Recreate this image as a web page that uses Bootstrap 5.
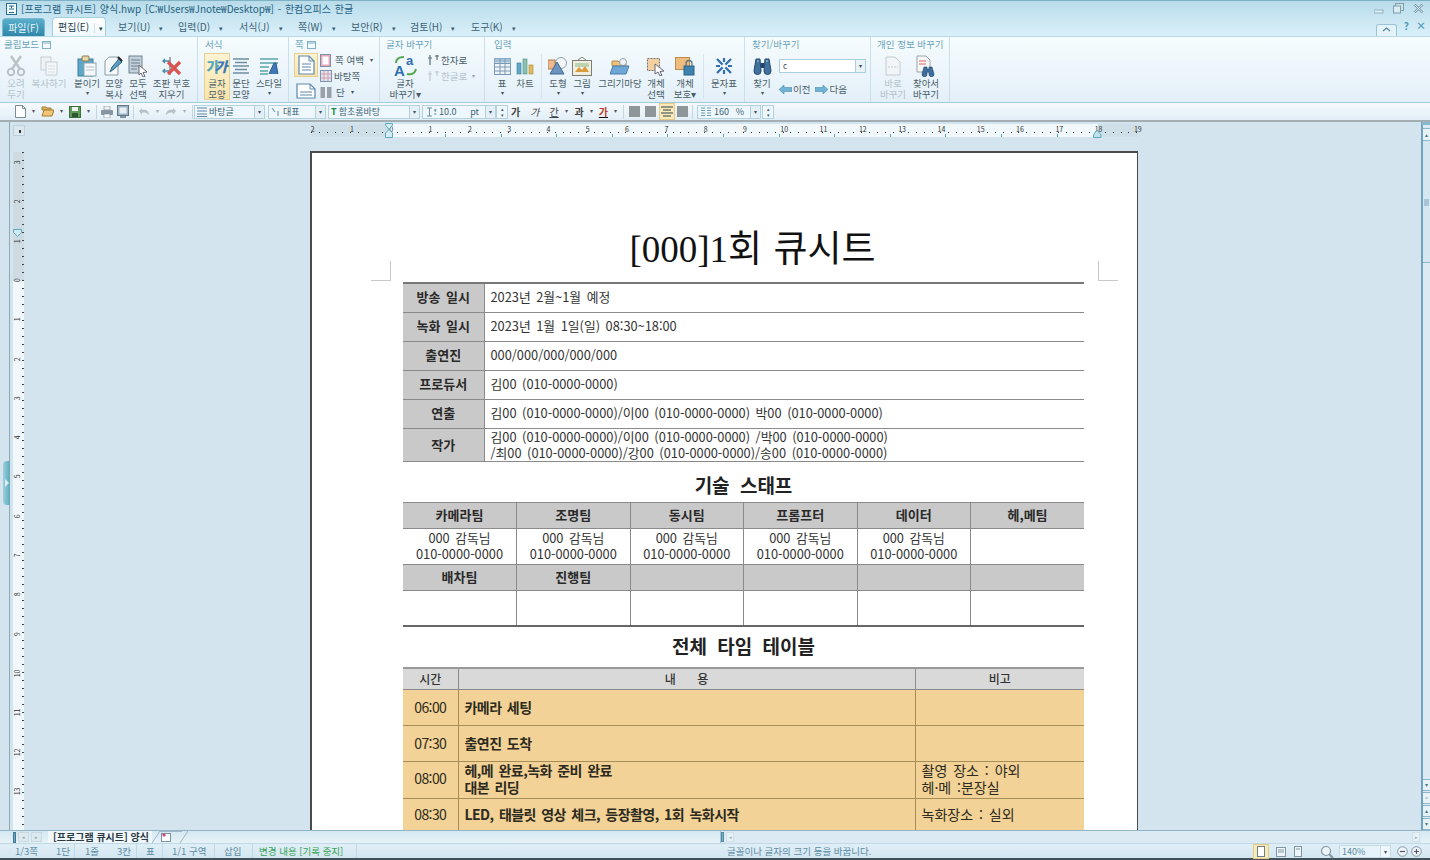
<!DOCTYPE html>
<html lang="ko">
<head>
<meta charset="utf-8">
<title>[프로그램 큐시트] 양식.hwp - 한컴오피스 한글</title>
<link href="https://cdn.jsdelivr.net/npm/bootstrap@5.3.3/dist/css/bootstrap.min.css" rel="stylesheet">
<style>
html, body { height: 860px; overflow: hidden; }
body { width: 1430px; background: #d3e4ef; color: #5a6b75; font-family: "Noto Sans CJK KR", "Liberation Sans", sans-serif; font-size: 10px; line-height: 1.1; }
svg { display: block; }
.app { width: 1430px; height: 860px; position: relative; }

/* title + tabs */
.head-band { height: 36px; background: linear-gradient(#b9dcea, #d9f0fa); border-top: 1px solid #7fb1c4; }
.title-row { height: 15px; padding-left: 6px; color: #24617f; font-size: 10px; }
.title-row .ttl { margin-left: 4px; word-spacing: 1px; }
.win-btns { margin-left: auto; padding-right: 6px; gap: 9px; }
.menu-row { height: 20px; position: relative; padding-left: 2px; }
.menu-row .file-tab { width: 43px; height: 18px; background: linear-gradient(#58aecb, #2f86a8); border: 1px solid #7db8cf; border-bottom: 0; border-radius: 4px 4px 0 0; color: #e6f6fb; text-align: center; line-height: 17px; font-size: 10px; }
.menu-row .edit-tab { width: 54px; height: 19px; margin-left: 7px; background: linear-gradient(#fff, #eef8fc); border: 1px solid #a4cddd; border-bottom: 0; border-radius: 4px 4px 0 0; color: #2b3f4a; padding-left: 5px; line-height: 18px; font-size: 10px; position: relative; z-index: 2; white-space: nowrap; }
.menu-row .edit-tab i { font-style: normal; margin-left: 5px; border-left: 1px solid #cfe2ea; padding-left: 4px; font-size: 7px; }
.menu-row .nav-item { color: #3d6275; font-size: 10px; line-height: 20px; white-space: nowrap; }
.tab-w1 { width: 60px; } .tab-w2 { width: 61px; } .tab-w3 { width: 59px; } .tab-w4 { width: 53px; }
.first-tab { margin-left: 12px; margin-top: 1px; align-self: flex-start; }
.menu-row .nav-item i { font-style: normal; font-size: 7px; margin-left: 9px; }
.help-btns { position: absolute; right: 4px; top: 0; gap: 7px; color: #4e9cb8; font-size: 10px; font-weight: 700; }
.collapse-btn { width: 21px; height: 12px; margin-top: 8px; border: 1px solid #9cc3d2; border-bottom: 0; border-radius: 3px 3px 0 0; background: #e3f3f9; }
.help-btns span { padding-top: 4px; }

/* ribbon */
.ribbon { height: 67px; background: linear-gradient(#f6fcfe, #e3eff8); border-top: 1px solid #b7d8e4; border-bottom: 1px solid #a8cbd9; }
.rb-grp { height: 65px; border-right: 1px solid #c9dfe9; flex: none; position: relative; }
.rb-cap { height: 17px; padding-top: 2px; color: #6aa3ba; font-size: 9.5px; white-space: nowrap; }
.rb-cap svg { display: inline-block; margin-left: 3px; }
.rb-item { display: flex; flex-direction: column; align-items: center; font-size: 9.5px; line-height: 10.5px; color: #4a5e69; flex: none; white-space: nowrap; text-align: center; }
.rb-item .ico { height: 24px; display: flex; align-items: center; justify-content: center; }
.rb-item .ico.ico-s { height: 22px; }
.rb-item.off, .rb-line.off { color: #b5c2c9; }
.rb-item.on { background: linear-gradient(#fdf3d2, #f8e5ae); outline: 1px solid #e6cf90; }
.caret-d { font-size: 6px; line-height: 8px; color: #44525a; }
.rb-line { display: flex; align-items: center; height: 16px; font-size: 9.5px; color: #4a5e69; white-space: nowrap; }
.rb-sep { width: 1px; height: 44px; background: #d4e5ed; flex: none; }
.iw-16 { width: 16px; } .iw-20 { width: 20px; } .iw-22 { width: 22px; } .iw-24 { width: 24px; } .iw-26 { width: 26px; } .iw-28 { width: 28px; } .iw-30 { width: 30px; } .iw-34 { width: 34px; } .iw-39 { width: 39px; } .iw-46 { width: 46px; }
.gw-198 { width: 198px; } .gw-91 { width: 91px; } .gw-105 { width: 105px; } .gw-260 { width: 260px; } .gw-126 { width: 126px; } .gw-79 { width: 79px; }
.pl-4 { padding-left: 4px; } .pl-5 { padding-left: 5px; } .pl-6 { padding-left: 6px; } .pl-7 { padding-left: 7px; } .pl-9 { padding-left: 9px; }
.ml-1 { margin-left: 1px; } .ml-2 { margin-left: 2px; } .ml-3 { margin-left: 3px; } .ml-4 { margin-left: 4px; } .ml-5 { margin-left: 5px; } .ml-6 { margin-left: 6px; } .ml-7 { margin-left: 7px; } .ml-8 { margin-left: 8px; } .ml-10 { margin-left: 10px; } .ml-18 { margin-left: 18px; } .ml-20 { margin-left: 20px; }
.mt-m2 { margin-top: -2px; }
.glyph-pic { font-weight: 900; font-size: 14px; line-height: 18px; letter-spacing: -5px; padding-right: 5px; }
.gp-a { color: #58a8b8; } .gp-b { color: #3d78b8; font-style: italic; }
.find-box { width: 87px; height: 14px; margin-top: 5px; background: #fff; border: 1px solid #a9cedd; font-size: 8px; line-height: 12px; padding-left: 3px; color: #445; position: relative; }
.find-box i { position: absolute; right: 0; top: 0; bottom: 0; width: 10px; border-left: 1px solid #a9cedd; background: #e8f3f8; font-style: normal; font-size: 6px; text-align: center; }

/* quick toolbar */
.quick { height: 19px; background: linear-gradient(#f5fafd, #e2eef6); padding-left: 15px; border-bottom: 2px solid #a3aeb3; }
.quick .dd { font-size: 6px; color: #556; margin: 0 6px; }
.quick .dd.off { color: #aab; }
.combo { height: 14px; background: #eef8fc; border: 1px solid #b3d2df; display: flex; align-items: center; color: #3d6275; font-size: 9px; flex: none; }
.combo span.v { flex: 1; padding-left: 2px; white-space: nowrap; }
.combo .unit { margin-right: 6px; }
.combo .ar { width: 10px; align-self: stretch; background: #e4f0f6; border-left: 1px solid #b3d2df; font-size: 6px; line-height: 12px; text-align: center; color: #456; flex: none; }
.spin { width: 12px; height: 14px; border: 1px solid #b3d2df; background: #eef8fc; font-size: 5px; line-height: 6px; text-align: center; color: #456; flex: none; }
.cw-71 { width: 71px; } .cw-58 { width: 58px; } .cw-92 { width: 92px; } .cw-74 { width: 74px; } .cw-64 { width: 64px; }
.q-sep { width: 1px; height: 14px; background: #c6d6df; margin: 0 4px; flex: none; }
.q-sep.q-t { margin-left: 0; }
.q-sep.q-u { margin: 0 1px 0 0; }
.fmt-g { font-weight: 700; font-size: 10px; color: #444; line-height: 14px; flex: none; }
.fmt-r { color: #c0392b; text-decoration: underline; text-decoration-color: #111; }
.al-btn { width: 11px; height: 11px; background: #8e9699; flex: none; }
.al-on { width: 16px; height: 17px; background: #fbe9b8; border: 1px solid #e4cb8b; display: flex; align-items: center; justify-content: center; flex: none; }

/* work area */
.work { height: 708px; overflow: hidden; position: relative; }
.side-l { width: 27px; flex: none; position: relative; }
.side-l .rule-line { position: absolute; left: 9px; top: 0; bottom: 0; width: 1px; background: #8ea9b8; }
.corner-box { position: absolute; left: 13px; top: 3px; width: 12px; height: 11px; background: #dbe8f0; border: 1px solid #bcd1dc; }
.corner-box::after { content: ""; position: absolute; left: 5px; top: 4px; width: 2px; height: 3px; background: #333; }
.vruler { position: absolute; left: 13px; top: 30px; width: 11px; bottom: 0; background: #f1f8fb; }
.vruler::before { content: ""; position: absolute; left: 0; right: 0; top: 0; height: 129px; background: #cfdbe2; }
.vruler::after { content: ""; position: absolute; top: 0; bottom: 0; right: 0; width: 2px; background: repeating-linear-gradient(#444 0 1px, transparent 1px 8px); }
.vruler b { position: absolute; left: 0; width: 9px; height: 39.3px; font-size: 7px; font-weight: 400; color: #333; writing-mode: vertical-rl; transform: rotate(180deg); text-align: center; line-height: 9px; }
.vn-0 { top: -9px; } .vn-1 { top: 30.3px; } .vn-2 { top: 69.6px; } .vn-3 { top: 108.9px; } .vn-4 { top: 148.2px; } .vn-5 { top: 187.5px; } .vn-6 { top: 226.8px; } .vn-7 { top: 266.1px; } .vn-8 { top: 305.4px; } .vn-9 { top: 344.7px; } .vn-10 { top: 384px; } .vn-11 { top: 423.3px; } .vn-12 { top: 462.6px; } .vn-13 { top: 501.9px; } .vn-14 { top: 541.2px; } .vn-15 { top: 580.5px; } .vn-16 { top: 619.8px; }
.v-mark { position: absolute; left: 0; top: 77px; z-index: 2; }
.side-handle { position: absolute; left: 3px; top: 339px; width: 7px; height: 44px; background: linear-gradient(90deg, #9fd0dd, #5fa9bc); border-radius: 4px 0 0 4px; }
.side-handle::after { content: ""; position: absolute; left: 2px; top: 18px; border-left: 4px solid #d7eef5; border-top: 4px solid transparent; border-bottom: 4px solid transparent; }
.doc-pane { width: 1394px; flex: none; overflow: hidden; }
.hruler { width: 827px; height: 13px; margin: 2px 0 0 284px; display: flex; font-size: 7px; color: #333; position: relative;
  background: linear-gradient(90deg, #cfdfe8 0 79px, #f0f8fb 79px 787px, #cfdfe8 787px); }
.hruler::before { content: ""; position: absolute; left: 0; right: 0; top: 8px; height: 1px; background: repeating-linear-gradient(90deg, #333 0 1px, transparent 1px 7.86px); }
.hruler::after { content: ""; position: absolute; left: 134px; right: 80px; top: 10px; height: 3px; background: repeating-linear-gradient(90deg, #5ea9bf 0 1px, transparent 1px 55.6px); }
.hruler span { width: 39.3px; text-align: center; flex: none; line-height: 11px; }
.hruler span:first-child { margin-left: -18px; }
.margin-mark { position: absolute; top: -1px; z-index: 2; }
.mm-l { left: 74px; } .mm-r { left: 782px; }

.page-sheet { width: 828px; height: 900px; margin: 14px 0 0 283px; background: #fff; border: 2px solid #4a4a4a; border-bottom: 0; border-right-width: 1px; padding: 72px 0 0 91px; position: relative; color: #333; font-size: 12.8px; }
.crop { position: absolute; width: 20px; height: 20px; border-color: #c9c9c9; border-style: solid; border-width: 0; }
.crop-l { left: 59px; top: 108px; border-right-width: 1px; border-bottom-width: 1px; }
.crop-r { left: 786px; top: 108px; border-left-width: 1px; border-bottom-width: 1px; }
.doc-title { width: 681px; height: 46px; line-height: 50px; margin-bottom: 11px; padding-left: 18px; text-align: center; font-family: "Liberation Serif", "Noto Sans CJK KR", serif; font-size: 37px; color: #111; word-spacing: 2px; white-space: nowrap; }
.sec-head { width: 681px; height: 40px; text-align: center; font-weight: 700; font-size: 19px; color: #222; word-spacing: 5px; }
.sh-a { line-height: 46px; } .sh-b { line-height: 38px; }

.table.sheet { width: 681px; table-layout: fixed; margin: 0; border-collapse: collapse; --bs-table-bg: transparent; color: #333; }
.table.sheet > tbody > tr > td { padding: 0 6px; border: 1px solid #8a8a8a; border-left-width: 0; border-right-width: 0; vertical-align: middle; line-height: 16px; word-spacing: 2px; white-space: nowrap; overflow: hidden; box-shadow: none; }
.table.sheet > tbody > tr > td + td { border-left-width: 1px; }
.table.sheet > tbody > tr > td.th-g { background: #c9c9c9; text-align: center; font-weight: 700; color: #2a2a2a; font-size: 13px; }
.info-tb tr { height: 29px; } .info-tb tr.tall { height: 33px; }
.info-tb { border-top: 2px solid #777; }
.info-tb .c1 { width: 81px; }
.table.sheet.info-tb > tbody > tr:not(.tall) > td { padding-bottom: 2px; }
.staff-tb { border-top: 1px solid #888; border-bottom: 2px solid #666; }
.staff-tb tr.r1 { height: 26px; } .staff-tb tr.r2 { height: 36px; }
.table.sheet > tbody > tr.dk > td { border-top: 1px solid #333; }
.staff-tb td { text-align: center; }
.time-tb { border-top: 2px solid #999; }
.time-tb .c1 { width: 55px; } .time-tb .c3 { width: 169px; }
.time-tb tr.hd { height: 21px; } .time-tb tr.bd { height: 36px; }
.table.sheet.time-tb > tbody > tr > td { border-color: #a58e58; font-size: 14px; line-height: 18px; }
.table.sheet.time-tb > tbody > tr.hd > td { background: #d9d9d9; border-color: #8a8a8a; text-align: center; font-size: 12px; font-weight: 500; }
.table.sheet.time-tb > tbody > tr.bd > td { background: #f2d296; color: #2d2a20; }
.table.sheet.time-tb > tbody > tr.bd.lift2 > td { padding-bottom: 2px; line-height: 17px; }
.table.sheet.time-tb > tbody > tr.bd.lift1 > td { padding-bottom: 4px; }
.table.sheet.time-tb > tbody > tr.bd > td.tm { text-align: center; padding-left: 0; padding-right: 0; letter-spacing: -.6px; }
.table.sheet.time-tb > tbody > tr.bd > td.bb { font-weight: 700; letter-spacing: -.55px; }
.side-r { width: 9px; flex: none; position: relative; background: #dcebf3; border-left: 2px solid #6fa3c0; }
.sb-top { height: 3px; margin-left: -1px; background: #8ab9cf; }
.sb-btn { height: 13px; margin-top: 3px; background: #e7f2f7; border: 1px solid #8fb7ca; border-left: 0; border-right: 0; font-size: 6px; line-height: 11px; text-align: center; color: #4a7a92; }
.sb-thumb { height: 122px; border-bottom: 1px solid #8fb7ca; background: #d5e8f1; position: relative; }
.sb-thumb::after { content: ""; position: absolute; left: 1px; right: 1px; top: 58px; height: 7px; background: #a9c4d2; }
.sb-low { position: absolute; left: 0; right: 0; bottom: 0; }
.sb-low .sb-btn { margin-top: 1px; height: 12px; line-height: 10px; }

/* sheet tabs + status */
.tab-strip { height: 13px; background: linear-gradient(#d5e8f1, #e6f2f8); border-top: 1px solid #93b4c4; position: relative; color: #30505f; }
.strip-grip { width: 3px; height: 11px; margin-left: 13px; background: #6fa3bc; border: 1px solid #3f7a96; flex: none; }
.strip-arrow { width: 11px; height: 10px; background: #dde9ef; border: 1px solid #c8d8e0; font-size: 5px; line-height: 8px; text-align: center; color: #8aa; margin-left: 2px; flex: none; }
.doc-tab { margin-left: 6px; width: 104px; font-weight: 700; font-size: 10px; color: #2b3a42; white-space: nowrap; line-height: 12px; background: #f0f7fb; padding-left: 5px; flex: none; }
.hscroll { position: absolute; left: 720px; right: 9px; top: 0; bottom: 0; background: #dcebf3; border-left: 1px solid #a9c5d3; }
.hscroll::before { content: ""; position: absolute; left: 0; top: 1px; width: 3px; height: 10px; background: #7cb0c6; border: 1px solid #4f8aa5; }
.hs-btn { position: absolute; top: 1px; width: 8px; height: 10px; background: #e6f1f6; border: 1px solid #cfe0e8; font-size: 5px; line-height: 8px; text-align: center; color: #9ab; }
.hs-l { left: 5px; } .hs-r { right: 1px; }
.status { height: 17px; background: linear-gradient(#e0eff7, #d3e6f1); color: #5d8ba2; font-size: 9.5px; border-bottom: 2px solid #41505a; border-top: 1px solid #c1d9e5; position: relative; }
.st-cell { height: 14px; line-height: 14px; flex: none; white-space: nowrap; border-right: 1px solid #c1d8e4; }
.sc-75 { width: 75px; padding-left: 15px; } .sc-62 { width: 62px; padding-left: 10px; } .sc-26 { width: 26px; padding-left: 9px; } .sc-52 { width: 52px; padding-left: 9px; } .sc-38 { width: 38px; padding-left: 9px; } .sc-104 { width: 104px; padding-left: 6px; color: #36a153; }
.gap-in { margin-left: 18px; }
.st-hint { position: absolute; left: 727px; top: 0; line-height: 14px; white-space: nowrap; }
.st-right { position: absolute; right: 8px; top: 0; height: 15px; }
.view-on { width: 16px; height: 15px; background: #fbe9b8; border: 1px solid #e4cb8b; display: flex; align-items: center; justify-content: center; }
.zoom-box { width: 52px; height: 13px; background: #e6f3f9; border: 1px solid #c5dce7; margin-left: 5px; padding-left: 2px; line-height: 11px; font-size: 9px; position: relative; }
.zoom-box i { position: absolute; right: 0; top: 0; bottom: 0; width: 10px; background: #f0f7fb; border-left: 1px solid #c5dce7; font-style: normal; font-size: 6px; text-align: center; color: #456; }
</style>
</head>
<body>
<div class="app d-flex flex-column">

  <div class="head-band">
    <div class="title-row d-flex align-items-center">
      <svg width="11" height="12" viewBox="0 0 11 12"><rect x=".5" y=".5" width="10" height="11" fill="#f3fbfe" stroke="#2a6f90"/><path d="M3 3h5M5.5 3v2M3 6h5M3 9.5h5" stroke="#1f6e92" fill="none"/></svg>
      <span class="ttl">[프로그램 큐시트] 양식.hwp [C:₩Users₩Jnote₩Desktop₩] - 한컴오피스 한글</span>
      <div class="win-btns d-flex align-items-center">
        <svg width="10" height="10" viewBox="0 0 10 10"><rect y="6" width="9" height="3" fill="#dbecf3" stroke="#8aa7b7" stroke-width=".8"/></svg>
        <svg width="11" height="11" viewBox="0 0 11 11"><rect x="2.5" y=".5" width="8" height="7" fill="#cfe2ea" stroke="#7f9eae"/><rect x=".5" y="3" width="7" height="7" fill="#dbecf3" stroke="#7f9eae"/></svg>
        <svg width="11" height="11" viewBox="0 0 11 11"><path d="M1.5 1.5l8 8M9.5 1.5l-8 8" stroke="#7f9eae" stroke-width="2.4" fill="none"/><path d="M1.5 1.5l8 8M9.5 1.5l-8 8" stroke="#e4f0f5" stroke-width=".8" fill="none"/></svg>
      </div>
    </div>
    <div class="menu-row d-flex align-items-end">
      <div class="file-tab">파일(F)</div>
      <div class="edit-tab">편집(E)<i>▾</i></div>
      <ul class="nav flex-nowrap first-tab">
        <li class="nav-item tab-w1">보기(U)<i>▾</i></li>
        <li class="nav-item tab-w2">입력(D)<i>▾</i></li>
        <li class="nav-item tab-w3">서식(J)<i>▾</i></li>
        <li class="nav-item tab-w4">쪽(W)<i>▾</i></li>
        <li class="nav-item tab-w3">보안(R)<i>▾</i></li>
        <li class="nav-item tab-w2">검토(H)<i>▾</i></li>
        <li class="nav-item tab-w3">도구(K)<i>▾</i></li>
      </ul>
      <div class="help-btns d-flex">
        <div class="collapse-btn"><svg width="19" height="9" viewBox="0 0 19 9"><path d="M6 6l3.5-3L13 6" stroke="#5b8496" stroke-width="1.2" fill="none"/></svg></div>
        <span>?</span><span>×</span>
      </div>
    </div>
  </div>

  <div class="ribbon d-flex">
    <!-- 클립보드 -->
    <div class="rb-grp gw-198 pl-4">
      <div class="rb-cap">클립보드<svg width="9" height="8" viewBox="0 0 9 8"><rect x=".5" y=".5" width="8" height="7" fill="none" stroke="#7fb0c4"/><path d="M1 2h7" stroke="#7fb0c4"/></svg></div>
      <div class="d-flex">
        <div class="rb-item off iw-24"><div class="ico"><svg width="20" height="22" viewBox="0 0 20 22"><path d="M5 1l9 13M15 1L6 14" stroke="#b9c3c8" stroke-width="2.4" fill="none"/><circle cx="5" cy="17" r="3.2" fill="none" stroke="#b9c3c8" stroke-width="2"/><circle cx="15" cy="17" r="3.2" fill="none" stroke="#b9c3c8" stroke-width="2"/></svg></div>오려<br>두기</div>
        <div class="rb-item off iw-34 ml-4"><div class="ico"><svg width="18" height="20" viewBox="0 0 18 20"><rect x="1" y="1" width="10" height="13" fill="#eef2f4" stroke="#c4ced3"/><rect x="6" y="6" width="11" height="13" fill="#f4f7f8" stroke="#c4ced3"/><path d="M8 10h7M8 13h7M8 16h7" stroke="#d4dde1"/></svg></div>복사하기</div>
        <div class="rb-item iw-26 ml-8"><div class="ico"><svg width="20" height="22" viewBox="0 0 20 22"><rect x="1" y="4" width="15" height="17" fill="#5da7c9" stroke="#3e7d9d"/><rect x="5" y="1" width="7" height="5" rx="1" fill="#e9d9a8" stroke="#8c7a4c"/><rect x="7" y="8" width="12" height="13" fill="#f6f9fb" stroke="#8aa3b1"/><path d="M9 12h8M9 15h8" stroke="#aebfc9"/></svg></div>붙이기<span class="caret-d">▾</span></div>
        <div class="rb-item iw-20 ml-4"><div class="ico"><svg width="20" height="22" viewBox="0 0 20 22"><path d="M1 6l4-4h9v18H1z" fill="#f4f8fa" stroke="#8c9da7"/><path d="M6 17l2-5 7-8 3 3-8 7z" fill="#5aa0c4" stroke="#38667f"/><path d="M14 2l4 4" stroke="#222" stroke-width="2"/></svg></div>모양<br>복사</div>
        <div class="rb-item iw-20 ml-4"><div class="ico"><svg width="20" height="22" viewBox="0 0 20 22"><rect x="1" y="1" width="13" height="17" fill="#c3d1dc" stroke="#71828e"/><path d="M3 5h9M3 8h9M3 11h9M3 14h6" stroke="#6d7f8c"/><path d="M11 10l8 7-4 .5 2 4-2 .5-2-4-2 2z" fill="#fff" stroke="#667"/></svg></div>모두<br>선택</div>
        <div class="rb-item iw-39 ml-4"><div class="ico"><svg width="20" height="20" viewBox="0 0 20 20"><path d="M8 5h-7M3 3L1 5l2 2M8 15h-7M3 13l-2 2 2 2" stroke="#4e88ad" stroke-width="1.4" fill="none"/><path d="M8 1v18" stroke="#7b8b95" stroke-width="1.4"/><path d="M6 6l12 12M18 6L6 18" stroke="#d9534f" stroke-width="3.2"/></svg></div>조판 부호<br>지우기</div>
      </div>
    </div>
    <!-- 서식 -->
    <div class="rb-grp gw-91 pl-7">
      <div class="rb-cap">서식</div>
      <div class="d-flex">
        <div class="rb-item on iw-24"><div class="ico"><span class="glyph-pic"><span class="gp-a">가</span><span class="gp-b">가</span></span></div>글자<br>모양</div>
        <div class="rb-item iw-24"><div class="ico"><svg width="18" height="16" viewBox="0 0 18 16"><path d="M1 1h16M3 4.500h12M1 8h16M3 11.500h12M1 15h16" stroke="#6f8da3" stroke-width="1.3"/></svg></div>문단<br>모양</div>
        <div class="rb-item iw-28 ml-2"><div class="ico"><svg width="20" height="20" viewBox="0 0 20 20"><path d="M1 3h18M1 7h18M1 11h9M1 15h8M1 18h8" stroke="#5aa5a9" stroke-width="1.4"/><path d="M10 18L15 7h2l2 11" fill="#3f78b5" stroke="#2d5f94"/></svg></div>스타일<span class="caret-d">▾</span></div>
      </div>
    </div>
    <!-- 쪽 -->
    <div class="rb-grp gw-91 pl-6">
      <div class="rb-cap">쪽<svg width="9" height="8" viewBox="0 0 9 8"><rect x=".5" y=".5" width="8" height="7" fill="none" stroke="#7fb0c4"/><path d="M1 2h7" stroke="#7fb0c4"/></svg></div>
      <div class="d-flex">
        <div class="d-flex flex-column">
          <div class="rb-item on iw-22"><div class="ico ico-s"><svg width="17" height="20" viewBox="0 0 17 20"><path d="M1 1h10l5 5v13H1z" fill="#fff" stroke="#5a89ad" stroke-width="1.2"/><path d="M11 1v5h5M4 9h9M4 12h9M4 15h9" stroke="#5a89ad" fill="none"/></svg></div></div>
          <div class="rb-item iw-22 mt-1"><div class="ico ico-s"><svg width="20" height="16" viewBox="0 0 20 16"><path d="M1 1h13l5 5v9H1z" fill="#fff" stroke="#5a89ad" stroke-width="1.2"/><path d="M14 1v5h5M4 9h12M4 12h12" stroke="#5a89ad" fill="none"/></svg></div></div>
        </div>
        <div class="d-flex flex-column ml-3 mt-m2">
          <div class="rb-line"><svg width="11" height="13" viewBox="0 0 11 13"><rect x=".5" y=".5" width="10" height="12" fill="#e9a9b7" stroke="#7f8fa8"/><rect x="2.500" y="2.500" width="6" height="8" fill="#fff"/></svg><span class="ml-4">쪽 여백</span><span class="caret-d ml-6">▾</span></div>
          <div class="rb-line"><svg width="12" height="12" viewBox="0 0 12 12"><rect x=".5" y=".5" width="11" height="11" fill="#dfe8f1" stroke="#7d93ae"/><path d="M1 4h10M1 8h10M4 1v10M8 1v10" stroke="#d99aa8"/></svg><span class="ml-2">바탕쪽</span></div>
          <div class="rb-line"><svg width="12" height="11" viewBox="0 0 12 11"><path d="M.5 0h4.500v11H.5zM7 0h4.500v11H7z" fill="#9aa2a7"/></svg><span class="ml-4">단</span><span class="caret-d ml-6">▾</span></div>
        </div>
      </div>
    </div>
    <!-- 글자 바꾸기 -->
    <div class="rb-grp gw-105 pl-6">
      <div class="rb-cap">글자 바꾸기</div>
      <div class="d-flex">
        <div class="rb-item iw-30 ml-4"><div class="ico"><svg width="24" height="24" viewBox="0 0 24 24"><text x="1" y="22" font-family="Liberation Sans" font-size="15" font-weight="700" fill="#2f6fb0">A</text><text x="13" y="11" font-family="Liberation Sans" font-size="13" font-weight="700" fill="#2f6fb0">a</text><path d="M3 9c0-4 3-6 8-6" stroke="#55a84f" stroke-width="2" fill="none"/><path d="M14 20c5 1 8-1 9-5" stroke="#55a84f" stroke-width="2" fill="none"/></svg></div>글자<br>바꾸기▾</div>
        <div class="d-flex flex-column ml-7 mt-m2">
          <div class="rb-line"><svg width="13" height="12" viewBox="0 0 13 12"><path d="M3 1v10M1 4h4M8 2l4 0M10 1v5" stroke="#5b6f7b" stroke-width="1.2" fill="none"/></svg><span class="ml-1">한자로</span></div>
          <div class="rb-line off"><svg width="13" height="12" viewBox="0 0 13 12"><path d="M3 1v10M1 4h4M8 2l4 0M10 1v5" stroke="#c0cbd1" stroke-width="1.2" fill="none"/></svg><span class="ml-1">한글로</span><span class="caret-d ml-5 opacity-50">▾</span></div>
        </div>
      </div>
    </div>
    <!-- 입력 -->
    <div class="rb-grp gw-260 pl-9">
      <div class="rb-cap">입력</div>
      <div class="d-flex">
        <div class="rb-item iw-16"><div class="ico"><svg width="17" height="17" viewBox="0 0 17 17"><rect x=".5" y=".5" width="16" height="16" fill="#eef4f8" stroke="#7d98b3"/><rect x=".5" y=".5" width="16" height="4" fill="#9fc0da"/><path d="M.5 5.500h16M.5 9h16M.5 13h16M6 1v15M11 1v15" stroke="#7d98b3" fill="none"/></svg></div>표<span class="caret-d">▾</span></div>
        <div class="rb-item iw-24 ml-3"><div class="ico"><svg width="18" height="18" viewBox="0 0 18 18"><rect x="1" y="6" width="4" height="11" fill="#62a8c6" stroke="#3a7e9d" stroke-width=".6"/><rect x="7" y="2" width="4" height="15" fill="#8cc1b2" stroke="#4d8f7f" stroke-width=".6"/><rect x="13" y="8" width="4" height="9" fill="#e5b95d" stroke="#a48432" stroke-width=".6"/></svg></div>차트</div>
        <div class="rb-sep ml-4"></div>
        <div class="rb-item iw-20 ml-6"><div class="ico"><svg width="20" height="18" viewBox="0 0 20 18"><circle cx="13" cy="6" r="5.500" fill="#f3f6f8" stroke="#8ea2ad"/><rect x="0" y="3" width="7" height="9" fill="#edb98d" stroke="#b07f50"/><path d="M9 5l7 12H2z" fill="#6d93bf" stroke="#47698f"/></svg></div>도형<span class="caret-d">▾</span></div>
        <div class="rb-item iw-20 ml-4"><div class="ico"><svg width="20" height="19" viewBox="0 0 20 19"><rect x=".5" y="3.500" width="19" height="15" fill="#f2eee1" stroke="#7d7d72"/><path d="M3 15l4-5 3 3 3-4 4 6z" fill="#d99b3b"/><rect x="3" y="6" width="14" height="4" fill="#a7c9a0" opacity=".7"/><path d="M6 3l4-3 4 3" stroke="#7d7d72" fill="none"/></svg></div>그림<span class="caret-d">▾</span></div>
        <div class="rb-item iw-46 ml-5"><div class="ico"><svg width="20" height="17" viewBox="0 0 20 17"><path d="M2 3h6l2 2h6v3H2z" fill="#eec27a" stroke="#b58a43"/><circle cx="13" cy="4" r="3.500" fill="#eef3f6" stroke="#93a6b1"/><path d="M3 8h16l-3 8H0z" fill="#6ea7d6" stroke="#497fa9"/></svg></div>그리기마당</div>
        <div class="rb-item iw-24 ml-1"><div class="ico"><svg width="20" height="19" viewBox="0 0 20 19"><rect x="1.500" y="1.500" width="12" height="12" fill="#f4cfa1" stroke="#777" stroke-dasharray="2 1"/><path d="M9 7l9 7-4 .5 2 4-2 .5-2-4-3 2z" fill="#fff" stroke="#667"/></svg></div>개체<br>선택</div>
        <div class="rb-item iw-28 ml-3"><div class="ico"><svg width="20" height="19" viewBox="0 0 20 19"><rect x=".5" y=".5" width="14" height="12" fill="#f0bc7d" stroke="#b78a4f"/><rect x="9" y="9" width="10" height="9" fill="#3d83ad" stroke="#2b6385"/><path d="M11 9V6.500a3 3 0 0 1 6 0V9" stroke="#5e7684" stroke-width="1.3" fill="none"/></svg></div>개체<br>보호▾</div>
        <div class="rb-sep ml-4"></div>
        <div class="rb-item iw-30 ml-5"><div class="ico"><svg width="18" height="18" viewBox="0 0 18 18"><path d="M2 2l14 14M16 2L2 16M9 1v4M9 13v4M1 9h4M13 9h4" stroke="#2f6fb4" stroke-width="2.200"/><circle cx="9" cy="9" r="2" fill="#fff"/></svg></div>문자표<span class="caret-d">▾</span></div>
      </div>
    </div>
    <!-- 찾기 -->
    <div class="rb-grp gw-126 pl-7">
      <div class="rb-cap">찾기/바꾸기</div>
      <div class="d-flex">
        <div class="rb-item iw-20"><div class="ico"><svg width="19" height="18" viewBox="0 0 19 18"><path d="M3 2h4l1 12a3.500 3.500 0 0 1-7 0z" fill="#41719f" stroke="#23486d"/><path d="M12 2h4l2 12a3.500 3.500 0 0 1-7 0z" fill="#41719f" stroke="#23486d"/><path d="M8 6h3v5H8z" fill="#23486d"/><path d="M4 4h2M13 4h2" stroke="#b9d2e6"/></svg></div>찾기<span class="caret-d">▾</span></div>
        <div class="d-flex flex-column ml-7">
          <div class="find-box">c<i>▾</i></div>
          <div class="rb-line mt-2">
            <svg width="13" height="9" viewBox="0 0 13 9"><path d="M0 4.500L5 0v2.500h8v4H5V9z" fill="#70b3d4" stroke="#4a8cac" stroke-width=".6"/></svg><span class="ml-1">이전</span>
            <svg class="ml-5" width="13" height="9" viewBox="0 0 13 9"><path d="M13 4.500L8 0v2.500H0v4h8V9z" fill="#70b3d4" stroke="#4a8cac" stroke-width=".6"/></svg><span class="ml-1">다음</span>
          </div>
        </div>
      </div>
    </div>
    <!-- 개인 정보 -->
    <div class="rb-grp gw-79 pl-6">
      <div class="rb-cap">개인 정보 바꾸기</div>
      <div class="d-flex">
        <div class="rb-item off iw-26 ml-3"><div class="ico"><svg width="16" height="20" viewBox="0 0 16 20"><path d="M1 1h9l5 5v13H1z" fill="#f2f5f7" stroke="#c1ccd2"/><path d="M3 11h10" stroke="#c1ccd2" stroke-dasharray="2 1"/></svg></div>바로<br>바꾸기</div>
        <div class="rb-item iw-26 ml-7"><div class="ico"><svg width="20" height="22" viewBox="0 0 20 22"><path d="M1 1h9l4 4v12H1z" fill="#f7f7f7" stroke="#9aa4ab"/><path d="M3 6h7M3 9h7" stroke="#d66"/><path d="M8 12h3v2h2v-2h3l2 7a2.500 2.500 0 0 1-5 .5V17h-2v2.500a2.500 2.500 0 0 1-5-.5z" fill="#3d6d9d" stroke="#23486d" stroke-width=".6"/></svg></div>찾아서<br>바꾸기</div>
      </div>
    </div>
  </div>

  <div class="quick d-flex align-items-center">
    <svg width="11" height="13" viewBox="0 0 11 13"><path d="M.5.500h7l3 3v9H.5z" fill="#fff" stroke="#7a8c97"/><path d="M7.500.5v3h3" fill="none" stroke="#7a8c97"/></svg><span class="dd">▾</span>
    <svg width="13" height="11" viewBox="0 0 13 11"><path d="M1 1h4l1 1h4v2H1z" fill="#e2b25e" stroke="#a67d32"/><path d="M1 10l2-6h10l-2 6z" fill="#f0c674" stroke="#a67d32"/></svg><span class="dd">▾</span>
    <svg width="12" height="12" viewBox="0 0 12 12"><rect x=".5" y=".5" width="11" height="11" fill="#5f9a5b" stroke="#3e6e3b"/><rect x="3" y="1" width="6" height="4" fill="#eef4ee"/><rect x="3" y="7" width="6" height="4" fill="#2f5530"/></svg><span class="dd">▾</span>
    <div class="q-sep q-t"></div>
    <svg width="12" height="12" viewBox="0 0 12 12"><rect x="3" y="0" width="6" height="4" fill="#eef2f5" stroke="#84939c" stroke-width=".7"/><rect x="0" y="4" width="12" height="5" rx="1" fill="#8796a0"/><rect x="3" y="8" width="6" height="4" fill="#fff" stroke="#84939c" stroke-width=".7"/></svg>
    <svg class="ml-4" width="12" height="13" viewBox="0 0 12 13"><rect x=".5" y=".5" width="11" height="10" fill="#9fb3c2" stroke="#5f7687"/><rect x="2.500" y="2.500" width="7" height="6" fill="#e9f0f4"/><path d="M3 12h6" stroke="#5f7687" stroke-width="1.500"/></svg>
    <div class="q-sep"></div>
    <svg width="12" height="9" viewBox="0 0 12 9"><path d="M1 4l3-3v2c4-1 7 1 7 5-2-2-4-3-7-2v2z" fill="#b6c1c8"/></svg><span class="dd off">▾</span>
    <svg width="12" height="9" viewBox="0 0 12 9"><path d="M11 4L8 1v2C4 2 1 4 1 8c2-2 4-3 7-2v2z" fill="#b6c1c8"/></svg><span class="dd off">▾</span>
    <div class="q-sep q-u"></div>
    <div class="combo cw-71"><svg class="ml-2" width="10" height="10" viewBox="0 0 10 10"><path d="M0 1h10M0 4h10M0 7h10M0 9.500h10" stroke="#5f84a8" stroke-width="1.200"/></svg><span class="v">바탕글</span><span class="ar">▾</span></div>
    <div class="combo cw-58 ml-3"><svg class="ml-2" width="10" height="10" viewBox="0 0 10 10"><path d="M1 1l3 4M7 4v5" stroke="#7a9db5" stroke-width="1.200"/></svg><span class="v">대표</span><span class="ar">▾</span></div>
    <div class="combo cw-92 ml-2"><span class="ml-2 fw-bold text-success">T</span><span class="v">함초롬바탕</span><span class="ar">▾</span></div>
    <div class="combo cw-74 ml-2"><svg class="ml-3" width="11" height="10" viewBox="0 0 11 10"><path d="M1 1h5M3.500 1v8M1 9h5M8 3h2.500M9.200 2v3M8 7h2.500" stroke="#6f8da3" fill="none"/></svg><span class="v">10.0</span><span class="unit">pt</span><span class="ar">▾</span></div>
    <div class="spin">▴<br>▾</div>
    <span class="fmt-g ml-3">가</span>
    <span class="fmt-g ml-10 fst-italic fw-normal">가</span>
    <span class="fmt-g ml-10 text-decoration-underline fw-normal">간</span><span class="dd">▾</span>
    <span class="fmt-g ml-1">과</span><span class="dd">▾</span>
    <span class="fmt-g fmt-r">가</span><span class="dd">▾</span>
    <div class="q-sep q-t"></div>
    <div class="al-btn ml-1"></div>
    <div class="al-btn ml-5"></div>
    <div class="al-on ml-3"><svg width="12" height="11" viewBox="0 0 12 11"><path d="M0 1h12M2 4h8M0 7h12M2 10h8" stroke="#6f7a70" stroke-width="1.600"/></svg></div>
    <div class="al-btn ml-2"></div>
    <div class="q-sep"></div>
    <div class="combo cw-64"><svg class="ml-2" width="12" height="10" viewBox="0 0 12 10"><path d="M1 1h4M1 3.500h4M1 6h4M1 8.500h4M7 1h4M7 3.500h4M7 6h4M7 8.500h4" stroke="#6f9db5"/></svg><span class="v">160</span><span class="unit">%</span><span class="ar">▾</span></div>
    <div class="spin ml-1">▴<br>▾</div>
  </div>

  <div class="work d-flex">
    <div class="side-l">
      <div class="rule-line"></div>
      <div class="corner-box"></div>
      <div class="vruler">
        <b class="vn-0">3</b><b class="vn-1">2</b><b class="vn-2">1</b><b class="vn-3">0</b><b class="vn-4">1</b><b class="vn-5">2</b><b class="vn-6">3</b><b class="vn-7">4</b><b class="vn-8">5</b><b class="vn-9">6</b><b class="vn-10">7</b><b class="vn-11">8</b><b class="vn-12">9</b><b class="vn-13">10</b><b class="vn-14">11</b><b class="vn-15">12</b><b class="vn-16">13</b>
        <svg class="v-mark" width="9" height="8" viewBox="0 0 9 8"><path d="M.5.500h8v3L4.500 7.500.5 3.500z" fill="#cfeaf0" stroke="#5ea9bf"/></svg>
      </div>
      <div class="side-handle"></div>
    </div>
    <div class="doc-pane">
      <div class="hruler">
        <span>2</span><span>1</span><span>0</span><span>1</span><span>2</span><span>3</span><span>4</span><span>5</span><span>6</span><span>7</span><span>8</span><span>9</span><span>10</span><span>11</span><span>12</span><span>13</span><span>14</span><span>15</span><span>16</span><span>17</span><span>18</span><span>19</span>
        <svg class="margin-mark mm-l" width="9" height="15" viewBox="0 0 9 15"><path d="M.5.500h7v1.500L4 6.500 7.500 10v4.500h-7V10L4 6.500.5 2z" fill="#d6eef3" stroke="#5ea9bf"/></svg>
        <svg class="margin-mark mm-r" width="9" height="15" viewBox="0 0 9 15"><path d="M4 7l4 5v2.500H.5V12z" fill="#bfe3ea" stroke="#5ea9bf"/></svg>
      </div>
      <div class="page-sheet">
        <div class="crop crop-l"></div>
        <div class="crop crop-r"></div>
        <div class="doc-title">[000]1회 큐시트</div>
        <table class="table sheet info-tb">
          <colgroup><col class="c1"><col></colgroup>
          <tbody>
            <tr><td class="th-g">방송 일시</td><td>2023년 2월~1월 예정</td></tr>
            <tr><td class="th-g">녹화 일시</td><td>2023년 1월 1일(일) 08:30~18:00</td></tr>
            <tr><td class="th-g">출연진</td><td>000/000/000/000/000</td></tr>
            <tr><td class="th-g">프로듀서</td><td>김00 (010-0000-0000)</td></tr>
            <tr><td class="th-g">연출</td><td>김00 (010-0000-0000)/이00 (010-0000-0000) 박00 (010-0000-0000)</td></tr>
            <tr class="tall"><td class="th-g">작가</td><td>김00 (010-0000-0000)/이00 (010-0000-0000) /박00 (010-0000-0000)<br>/최00 (010-0000-0000)/강00 (010-0000-0000)/송00 (010-0000-0000)</td></tr>
          </tbody>
        </table>
        <div class="sec-head sh-a">기술 스태프</div>
        <table class="table sheet staff-tb">
          <tbody>
            <tr class="r1"><td class="th-g">카메라팀</td><td class="th-g">조명팀</td><td class="th-g">동시팀</td><td class="th-g">프롬프터</td><td class="th-g">데이터</td><td class="th-g">헤,메팀</td></tr>
            <tr class="r2"><td>000 감독님<br>010-0000-0000</td><td>000 감독님<br>010-0000-0000</td><td>000 감독님<br>010-0000-0000</td><td>000 감독님<br>010-0000-0000</td><td>000 감독님<br>010-0000-0000</td><td></td></tr>
            <tr class="r1 dk"><td class="th-g">배차팀</td><td class="th-g">진행팀</td><td class="th-g"></td><td class="th-g"></td><td class="th-g"></td><td class="th-g"></td></tr>
            <tr class="r2"><td></td><td></td><td></td><td></td><td></td><td></td></tr>
          </tbody>
        </table>
        <div class="sec-head sh-b">전체 타임 테이블</div>
        <table class="table sheet time-tb">
          <colgroup><col class="c1"><col><col class="c3"></colgroup>
          <tbody>
            <tr class="hd"><td>시간</td><td>내 &nbsp; &nbsp;용</td><td>비고</td></tr>
            <tr class="bd"><td class="tm">06:00</td><td class="bb">카메라 세팅</td><td></td></tr>
            <tr class="bd"><td class="tm">07:30</td><td class="bb">출연진 도착</td><td></td></tr>
            <tr class="bd lift2"><td class="tm">08:00</td><td class="bb">헤,메 완료,녹화 준비 완료<br>대본 리딩</td><td>촬영 장소 : 야외<br>헤·메 :분장실</td></tr>
            <tr class="bd lift1"><td class="tm">08:30</td><td class="bb">LED, 태블릿 영상 체크, 등장촬영, 1회 녹화시작</td><td>녹화장소 : 실외</td></tr>
          </tbody>
        </table>
      </div>
    </div>
    <div class="side-r">
      <div class="sb-top"></div>
      <div class="sb-btn">▴</div>
      <div class="sb-thumb"></div>
      <div class="sb-low">
        <div class="sb-btn">▾</div>
        <div class="sb-btn">▫</div>
        <div class="sb-btn">▴</div>
        <div class="sb-btn">▾</div>
      </div>
    </div>
  </div>

  <div class="tab-strip d-flex align-items-center">
    <div class="strip-grip"></div>
    <div class="strip-arrow ml-5">◂</div>
    <div class="strip-arrow">▸</div>
    <div class="doc-tab">[프로그램 큐시트] 양식</div>
    <svg width="36" height="12" viewBox="0 0 36 12"><path d="M0 12L8 0M28 12L36 0M8 .5h22" stroke="#9db8c6" fill="none"/><rect x="9.500" y="2.500" width="9" height="8" fill="#fff" stroke="#7a93a2"/><path d="M10 4l2-2 2 2-2 2z" fill="#d6447a"/></svg>
    <div class="hscroll"><span class="hs-btn hs-l">◂</span><span class="hs-btn hs-r">▸</span></div>
  </div>

  <div class="status d-flex">
    <div class="st-cell sc-75">1/3쪽<span class="gap-in">1단</span></div>
    <div class="st-cell sc-62">1줄<span class="gap-in">3칸</span></div>
    <div class="st-cell sc-26">표</div>
    <div class="st-cell sc-52">1/1 구역</div>
    <div class="st-cell sc-38">삽입</div>
    <div class="st-cell sc-104">변경 내용 [기록 중지]</div>
    <div class="st-hint">글꼴이나 글자의 크기 등을 바꿉니다.</div>
    <div class="st-right d-flex align-items-center">
      <div class="view-on"><svg width="8" height="11" viewBox="0 0 8 11"><rect x=".5" y=".5" width="7" height="10" fill="#fff" stroke="#6d7f8c"/></svg></div>
      <svg class="ml-7" width="10" height="10" viewBox="0 0 10 10"><rect x=".5" y=".5" width="9" height="9" fill="#eef4f8" stroke="#7f97a5"/><path d="M2 3h6M2 5h6" stroke="#7f97a5"/></svg>
      <svg class="ml-8" width="8" height="11" viewBox="0 0 8 11"><rect x=".5" y=".5" width="7" height="10" fill="#eef4f8" stroke="#7f97a5"/><path d="M2 3h4" stroke="#7f97a5"/></svg>
      <svg class="ml-18" width="14" height="14" viewBox="0 0 14 14"><circle cx="6" cy="6" r="4.500" fill="#eef4f8" stroke="#7f97a5" stroke-width="1.200"/><path d="M9 9l4 4" stroke="#7f97a5" stroke-width="2"/></svg>
      <div class="zoom-box">140%<i>▾</i></div>
      <svg class="ml-6" width="11" height="11" viewBox="0 0 11 11"><circle cx="5.500" cy="5.500" r="4.800" fill="#eef4f8" stroke="#7f97a5"/><path d="M3 5.500h5" stroke="#557" stroke-width="1.200"/></svg>
      <svg class="ml-3" width="11" height="11" viewBox="0 0 11 11"><circle cx="5.500" cy="5.500" r="4.800" fill="#eef4f8" stroke="#7f97a5"/><path d="M3 5.500h5M5.500 3v5" stroke="#557" stroke-width="1.200"/></svg>
    </div>
  </div>
</div>
<script src="https://cdn.jsdelivr.net/npm/bootstrap@5.3.3/dist/js/bootstrap.bundle.min.js"></script>
</body>
</html>
